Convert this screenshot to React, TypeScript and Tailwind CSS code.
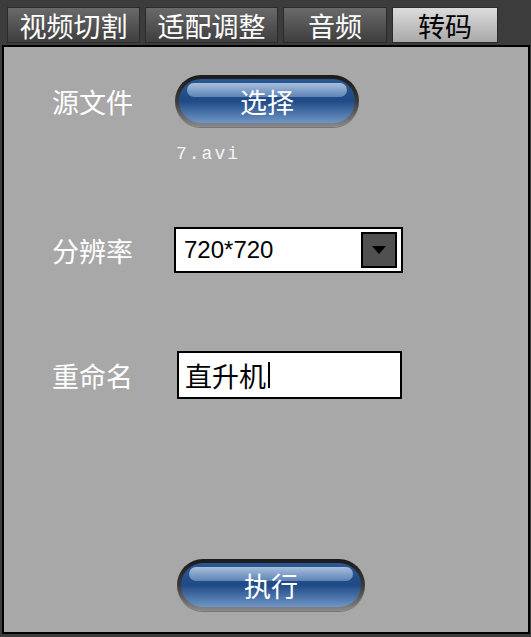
import React from "react";

const font = { fontFamily: '"Noto Sans CJK SC", "Noto Sans", sans-serif' };

function Tab({ label, active, width }: { label: string; active?: boolean; width: string }) {
  return (
    <div
      className={`${width} flex h-[36px] items-center justify-center border border-[#2a2a2a] text-[27px] leading-none ${
        active
          ? "bg-gradient-to-b from-[#dcdcdc] to-[#a9a9a9] text-black"
          : "bg-gradient-to-b from-[#6a6a6a] to-[#3e3e3e] text-white"
      }`}
    >
      {label}
    </div>
  );
}

function GlossButton({ label, width }: { label: string; width: string }) {
  return (
    <div
      className={`${width} h-[52px] rounded-full bg-gradient-to-b from-[#1a1a1a] via-[#3a3a3a] to-[#8a8a8a] p-[4px] shadow-[0_1px_0_#777]`}
    >
      <div className="relative flex h-full items-center justify-center rounded-full bg-gradient-to-b from-[#2b5791] via-[#1f4a86] to-[#6f96c6]">
        <div className="absolute left-[8px] right-[8px] top-[4px] h-[14px] rounded-full bg-gradient-to-b from-[#a9bfdc] to-[#5d84b6]" />
        <span className="relative text-[27px] leading-none text-white">{label}</span>
      </div>
    </div>
  );
}

export default function App() {
  return (
    <div className="h-[637px] w-[531px] bg-[#3c3c3c] pt-[7px]" style={font}>
      <div className="flex gap-[5px] pl-[7px]">
        <Tab label="视频切割" width="w-[133px]" />
        <Tab label="适配调整" width="w-[133px]" />
        <Tab label="音频" width="w-[104px]" />
        <Tab label="转码" width="w-[106px]" active />
      </div>
      <div className="ml-[2px] mt-[2px] h-[589px] w-[528px] border-2 border-black bg-[#a8a8a8] pl-[48px] pt-[28px]">
        <div className="flex items-center">
          <div className="w-[123px] text-[27px] leading-none text-white">源文件</div>
          <GlossButton label="选择" width="w-[184px]" />
        </div>
        <div className="ml-[124px] mt-[18px] font-['Liberation_Mono',monospace] text-[18px] leading-none tracking-[2px] text-[#f4f4f4]">
          7.avi
        </div>
        <div className="mt-[64px] flex items-center">
          <div className="w-[122px] text-[27px] leading-none text-white">分辨率</div>
          <div className="flex h-[46px] w-[229px] items-center justify-between border-2 border-black bg-white pl-[8px] pr-[4px]">
            <span className="font-['Liberation_Sans',sans-serif] text-[24px] text-black">720*720</span>
            <div className="flex h-[36px] w-[36px] items-center justify-center border-2 border-black bg-[#505050]">
              <svg width="14" height="8" viewBox="0 0 14 8">
                <path d="M0 0 H14 L7 8 Z" fill="#000" />
              </svg>
            </div>
          </div>
        </div>
        <div className="mt-[78px] flex items-center">
          <div className="w-[125px] text-[27px] leading-none text-white">重命名</div>
          <div className="flex h-[48px] w-[225px] items-center border-2 border-black bg-white pl-[6px]">
            <span className="text-[27px] leading-none text-black">直升机</span>
            <span className="ml-[2px] h-[26px] w-[2px] bg-black" />
          </div>
        </div>
        <div className="ml-[125px] mt-[160px]">
          <GlossButton label="执行" width="w-[188px]" />
        </div>
      </div>
    </div>
  );
}
